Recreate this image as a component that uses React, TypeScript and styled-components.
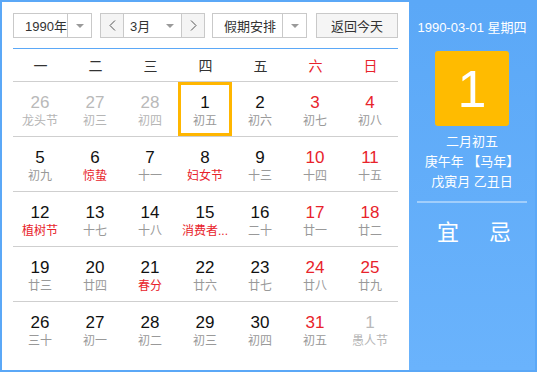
import React from 'react';
import styled, { createGlobalStyle } from 'styled-components';

const GlobalStyle = createGlobalStyle`
  html, body {
    margin: 0;
    padding: 0;
    background: #fff;
  }
  body {
    font-family: "Liberation Sans", "Noto Sans CJK SC", sans-serif;
  }
`;

const BLUE = '#5ba8f7';
const RED = '#e8232b';

const Frame = styled.div`
  width: 537px;
  height: 372px;
  box-sizing: border-box;
  border: 2px solid ${BLUE};
  display: flex;
`;

const Main = styled.div`
  width: 407px;
  box-sizing: border-box;
  padding: 11px 11px 0 11px;
  background: #fff;
`;

const Toolbar = styled.div`
  display: flex;
  align-items: center;
  height: 25px;
  padding-bottom: 10px;
  border-bottom: 1px solid ${BLUE};
`;

const Select = styled.div<{ width: number; ml?: number }>`
  display: flex;
  height: 25px;
  width: ${p => p.width}px;
  margin-left: ${p => p.ml || 0}px;
  box-sizing: border-box;
  border: 1px solid #c9c9c9;
  background: #fff;
  font-size: 13px;
  color: #333;
`;

const SelectText = styled.div<{ pl: number }>`
  flex: 1;
  display: flex;
  align-items: center;
  padding-left: ${p => p.pl}px;
`;

const Caret = styled.div<{ divider?: boolean }>`
  width: 23px;
  display: flex;
  align-items: center;
  justify-content: center;
  border-left: ${p => (p.divider ? '1px solid #c9c9c9' : 'none')};
  &::after {
    content: '';
    border-left: 4px solid transparent;
    border-right: 4px solid transparent;
    border-top: 4px solid #9a9a9a;
  }
`;

const ArrowBtn = styled.div`
  width: 22px;
  display: flex;
  align-items: center;
  justify-content: center;
  background: #f4f4f4;
`;

const Divider = styled.div`
  width: 1px;
  background: #c9c9c9;
`;

const TodayBtn = styled.div`
  margin-left: auto;
  width: 82px;
  height: 25px;
  box-sizing: border-box;
  border: 1px solid #c9c9c9;
  background: #f5f5f5;
  display: flex;
  align-items: center;
  justify-content: center;
  font-size: 13px;
  color: #333;
`;

const Grid = styled.div`
  display: grid;
  grid-template-columns: repeat(7, 55px);
`;

const WeekHead = styled.div<{ weekend?: boolean }>`
  height: 32px;
  display: flex;
  align-items: center;
  justify-content: center;
  font-size: 14px;
  color: ${p => (p.weekend ? RED : '#333')};
  border-bottom: 1px solid #cfcfcf;
`;

const Cell = styled.div<{ last?: boolean }>`
  height: 54px;
  border-bottom: ${p => (p.last ? 'none' : '1px solid #cfcfcf')};
  display: flex;
  justify-content: flex-start;
`;

const DayBox = styled.div<{ selected?: boolean }>`
  width: 54px;
  height: 54px;
  box-sizing: border-box;
  border: 3px solid ${p => (p.selected ? '#ffb600' : 'transparent')};
  display: flex;
  flex-direction: column;
  align-items: center;
  padding-top: 8px;
`;

const DayNum = styled.div<{ tone: 'normal' | 'red' | 'faded' }>`
  font-size: 17px;
  line-height: 20px;
  color: ${p => (p.tone === 'red' ? RED : p.tone === 'faded' ? '#b9b9b9' : '#111')};
`;

const Lunar = styled.div<{ tone: 'normal' | 'red' | 'faded' }>`
  font-size: 12px;
  line-height: 16px;
  white-space: nowrap;
  color: ${p => (p.tone === 'red' ? RED : p.tone === 'faded' ? '#b5b5b5' : '#999')};
`;

const Side = styled.div`
  flex: 1;
  background: linear-gradient(180deg, #5ba8f7 0%, #6ab3fc 100%);
  display: flex;
  flex-direction: column;
  align-items: center;
  color: #fff;
  padding-top: 18px;
`;

const DateLine = styled.div`
  font-size: 13px;
  line-height: 16px;
`;

const BigDay = styled.div`
  margin-top: 15px;
  width: 74px;
  height: 75px;
  border-radius: 3px;
  background: #ffbb00;
  display: flex;
  align-items: center;
  justify-content: center;
  font-size: 52px;
  font-weight: 300;
  color: #fff;
`;

const LunarInfo = styled.div`
  margin-top: 6px;
  font-size: 13px;
  line-height: 20px;
  text-align: center;
`;

const Sep = styled.div`
  margin-top: 9px;
  width: 110px;
  height: 2px;
  background: rgba(255, 255, 255, 0.4);
`;

const YiJi = styled.div`
  margin-top: 17px;
  display: flex;
  gap: 30px;
  font-size: 22px;
  line-height: 26px;
  padding-left: 4px;
`;

const Chevron = ({ dir }: { dir: 'l' | 'r' }) => (
  <svg width="7" height="11" viewBox="0 0 7 11">
    <polyline
      points={dir === 'l' ? '6,0.5 1,5.5 6,10.5' : '1,0.5 6,5.5 1,10.5'}
      fill="none"
      stroke="#555"
      strokeWidth="1"
    />
  </svg>
);

type Day = { n: number; l: string; other?: boolean; fest?: boolean; sel?: boolean };

const days: Day[] = [
  { n: 26, l: '龙头节', other: true },
  { n: 27, l: '初三', other: true },
  { n: 28, l: '初四', other: true },
  { n: 1, l: '初五', sel: true },
  { n: 2, l: '初六' },
  { n: 3, l: '初七' },
  { n: 4, l: '初八' },
  { n: 5, l: '初九' },
  { n: 6, l: '惊蛰', fest: true },
  { n: 7, l: '十一' },
  { n: 8, l: '妇女节', fest: true },
  { n: 9, l: '十三' },
  { n: 10, l: '十四' },
  { n: 11, l: '十五' },
  { n: 12, l: '植树节', fest: true },
  { n: 13, l: '十七' },
  { n: 14, l: '十八' },
  { n: 15, l: '消费者...', fest: true },
  { n: 16, l: '二十' },
  { n: 17, l: '廿一' },
  { n: 18, l: '廿二' },
  { n: 19, l: '廿三' },
  { n: 20, l: '廿四' },
  { n: 21, l: '春分', fest: true },
  { n: 22, l: '廿六' },
  { n: 23, l: '廿七' },
  { n: 24, l: '廿八' },
  { n: 25, l: '廿九' },
  { n: 26, l: '三十' },
  { n: 27, l: '初一' },
  { n: 28, l: '初二' },
  { n: 29, l: '初三' },
  { n: 30, l: '初四' },
  { n: 31, l: '初五' },
  { n: 1, l: '愚人节', other: true },
];

const weekNames = ['一', '二', '三', '四', '五', '六', '日'];

const App: React.FC = () => {
  return (
    <>
      <GlobalStyle />
      <Frame>
        <Main>
          <Toolbar>
            <Select width={79}>
              <SelectText pl={11}>1990年</SelectText>
              <Caret divider />
            </Select>
            <Select width={105} ml={8}>
              <ArrowBtn>
                <Chevron dir="l" />
              </ArrowBtn>
              <Divider />
              <SelectText pl={6}>3月</SelectText>
              <Caret />
              <Divider />
              <ArrowBtn>
                <Chevron dir="r" />
              </ArrowBtn>
            </Select>
            <Select width={95} ml={7}>
              <SelectText pl={11}>假期安排</SelectText>
              <Caret divider />
            </Select>
            <TodayBtn>返回今天</TodayBtn>
          </Toolbar>

          <Grid>
            {weekNames.map((w, i) => (
              <WeekHead key={w} weekend={i >= 5}>
                {w}
              </WeekHead>
            ))}
            {days.map((d, i) => {
              const col = i % 7;
              const numTone = d.other ? 'faded' : col >= 5 ? 'red' : 'normal';
              const lunarTone = d.other ? 'faded' : d.fest ? 'red' : 'normal';
              return (
                <Cell key={i} last={i >= 28}>
                  <DayBox selected={d.sel}>
                    <DayNum tone={numTone}>{d.n}</DayNum>
                    <Lunar tone={lunarTone}>{d.l}</Lunar>
                  </DayBox>
                </Cell>
              );
            })}
          </Grid>
        </Main>

        <Side>
          <DateLine>1990-03-01 星期四</DateLine>
          <BigDay>1</BigDay>
          <LunarInfo>
            <div>二月初五</div>
            <div>庚午年 【马年】</div>
            <div>戊寅月 乙丑日</div>
          </LunarInfo>
          <Sep />
          <YiJi>
            <span>宜</span>
            <span>忌</span>
          </YiJi>
        </Side>
      </Frame>
    </>
  );
};

export default App;
